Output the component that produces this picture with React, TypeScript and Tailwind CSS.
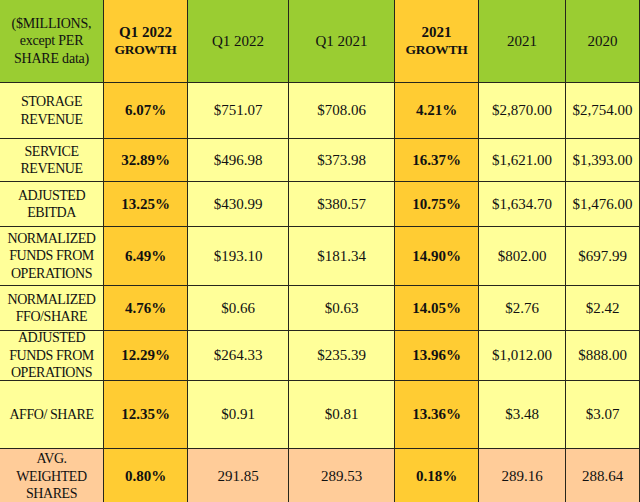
import React from "react";

type Row = {
  label: string[];
  q1g: string;
  q122: string;
  q121: string;
  g21: string;
  y21: string;
  y20: string;
  h: string;
  peach?: boolean;
};

const rows: Row[] = [
  { label: ["STORAGE", "REVENUE"], q1g: "6.07%", q122: "$751.07", q121: "$708.06", g21: "4.21%", y21: "$2,870.00", y20: "$2,754.00", h: "h-[56px]" },
  { label: ["SERVICE", "REVENUE"], q1g: "32.89%", q122: "$496.98", q121: "$373.98", g21: "16.37%", y21: "$1,621.00", y20: "$1,393.00", h: "h-[43px]" },
  { label: ["ADJUSTED", "EBITDA"], q1g: "13.25%", q122: "$430.99", q121: "$380.57", g21: "10.75%", y21: "$1,634.70", y20: "$1,476.00", h: "h-[45px]" },
  { label: ["NORMALIZED", "FUNDS FROM", "OPERATIONS"], q1g: "6.49%", q122: "$193.10", q121: "$181.34", g21: "14.90%", y21: "$802.00", y20: "$697.99", h: "h-[59px]" },
  { label: ["NORMALIZED", "FFO/SHARE"], q1g: "4.76%", q122: "$0.66", q121: "$0.63", g21: "14.05%", y21: "$2.76", y20: "$2.42", h: "h-[45px]" },
  { label: ["ADJUSTED", "FUNDS FROM", "OPERATIONS"], q1g: "12.29%", q122: "$264.33", q121: "$235.39", g21: "13.96%", y21: "$1,012.00", y20: "$888.00", h: "h-[50px]" },
  { label: ["AFFO/ SHARE"], q1g: "12.35%", q122: "$0.91", q121: "$0.81", g21: "13.36%", y21: "$3.48", y20: "$3.07", h: "h-[68px]" },
  { label: ["AVG.", "WEIGHTED", "SHARES"], q1g: "0.80%", q122: "291.85", q121: "289.53", g21: "0.18%", y21: "289.16", y20: "288.64", h: "h-[56px]", peach: true },
];

const cell = "flex flex-col items-center justify-center text-center border-r border-b border-[#26261c]";

export default function App() {
  return (
    <div
      className="w-[640px] h-[502px] overflow-hidden bg-[#ffff99] text-[#111]"
      style={{ fontFamily: '"Liberation Serif", serif' }}
    >
      <div className="grid grid-cols-[104px_84px_101px_106px_84px_87px_74px]">
        {/* header */}
        <div className={`${cell} h-[83px] bg-[#9acd32] text-[14px] tracking-[-0.2px] leading-[17.5px]`}>
          <span>($MILLIONS,</span>
          <span>except PER</span>
          <span>SHARE data)</span>
        </div>
        <div className={`${cell} h-[83px] bg-[#ffcc33] font-bold leading-[17px]`}>
          <span className="text-[15px]">Q1 2022</span>
          <span className="text-[13.5px] tracking-[-0.3px]">GROWTH</span>
        </div>
        <div className={`${cell} h-[83px] bg-[#9acd32] text-[15px]`}>Q1 2022</div>
        <div className={`${cell} h-[83px] bg-[#9acd32] text-[15px]`}>Q1 2021</div>
        <div className={`${cell} h-[83px] bg-[#ffcc33] font-bold leading-[17px]`}>
          <span className="text-[15px]">2021</span>
          <span className="text-[13.5px] tracking-[-0.3px]">GROWTH</span>
        </div>
        <div className={`${cell} h-[83px] bg-[#9acd32] text-[15px]`}>2021</div>
        <div className={`${cell} h-[83px] bg-[#9acd32] text-[15px]`}>2020</div>

        {rows.map((r) => {
          const bg = r.peach ? "bg-[#ffcc99]" : "bg-[#ffff99]";
          return (
            <React.Fragment key={r.label.join(" ")}>
              <div className={`${cell} ${r.h} ${bg} text-[14px] tracking-[-0.45px] leading-[17.5px]`}>
                {r.label.map((l) => (
                  <span key={l}>{l}</span>
                ))}
              </div>
              <div className={`${cell} ${r.h} bg-[#ffcc33] text-[15px] font-bold`}>{r.q1g}</div>
              <div className={`${cell} ${r.h} ${bg} text-[15px]`}>{r.q122}</div>
              <div className={`${cell} ${r.h} ${bg} text-[15px]`}>{r.q121}</div>
              <div className={`${cell} ${r.h} bg-[#ffcc33] text-[15px] font-bold`}>{r.g21}</div>
              <div className={`${cell} ${r.h} ${bg} text-[15px]`}>{r.y21}</div>
              <div className={`${cell} ${r.h} ${bg} text-[15px]`}>{r.y20}</div>
            </React.Fragment>
          );
        })}
      </div>
    </div>
  );
}
